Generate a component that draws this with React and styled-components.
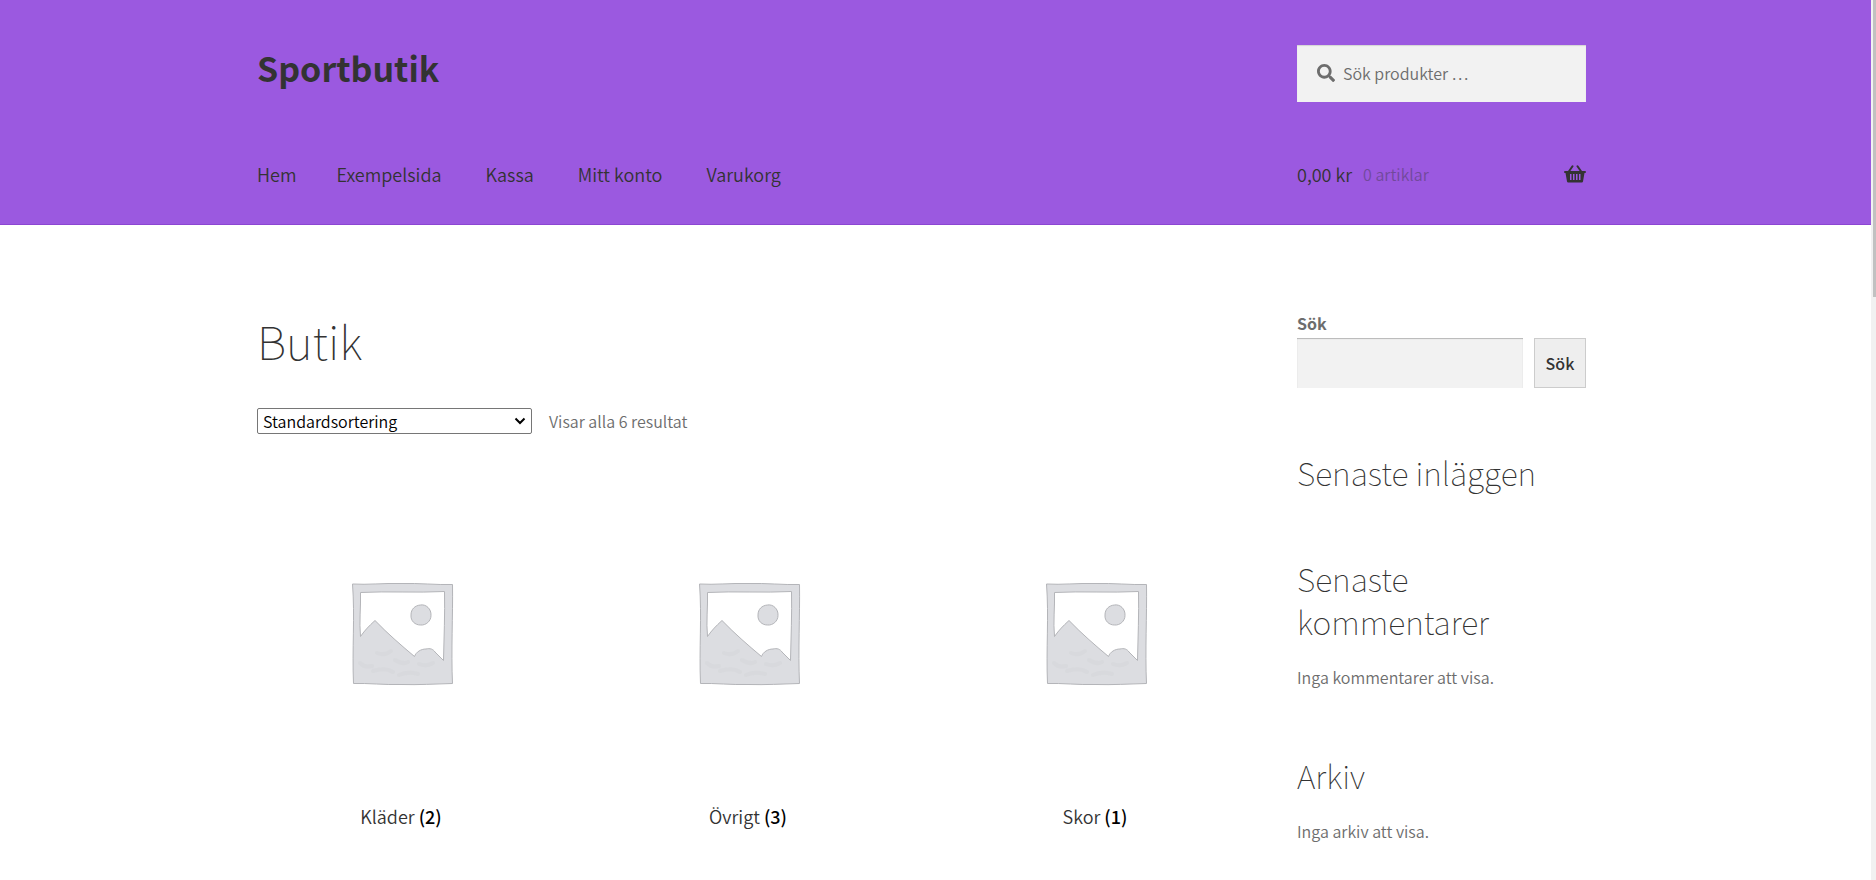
import React from "react";
import styled, { createGlobalStyle } from "styled-components";
import { FaSearch } from "react-icons/fa";

const GlobalStyle = createGlobalStyle`
  *, *::before, *::after { box-sizing: border-box; }
  body {
    margin: 0;
    background: #fff;
    color: #6d6d6d;
    font-family: "Source Sans Pro", "Noto Sans CJK SC", "Noto Sans", sans-serif;
    font-size: 16px;
    font-weight: 350;
    line-height: 28px;
  }
  h1, h2, p, ul { margin: 0; padding: 0; }
  ul { list-style: none; }
  a { color: inherit; text-decoration: none; }
  input, button, select { font-family: inherit; font-size: 16px; font-weight: 350; margin: 0; }
`;

const Window = styled.div`
  display: flex;
  height: 100vh;
  overflow: hidden;
`;

const Page = styled.div`
  flex: 1;
  min-width: 0;
`;

const ScrollTrack = styled.div`
  flex: none;
  width: 5px;
  padding-left: 2px;
  background: #f1f1f1;
`;

const ScrollThumb = styled.div`
  height: 297px;
  background: #c1c1c1;
`;

const Band = styled.div`
  padding: 0 48px 0 20px;
`;

const HeaderBand = styled(Band).attrs({ as: "header" })`
  background: #9b59e0;
  border-bottom: 1px solid #8c46d2;
`;

const Columns = styled.div`
  display: grid;
  grid-template-columns: minmax(0, 1fr) 289px;
  column-gap: 58px;
  max-width: 1329px;
  margin: 0 auto;
`;

const HeaderColumns = styled(Columns)`
  row-gap: 58px;
  padding: 45px 0 36px;
`;

const SiteTitle = styled.a`
  justify-self: start;
  color: #333;
  font-size: 34px;
  font-weight: 700;
  line-height: 46px;
`;

const ProductSearch = styled.label`
  display: flex;
  align-items: center;
  gap: 8px;
  height: 57px;
  padding: 0 20px 2px;
  background: #f2f2f2;
  box-shadow: inset 0 1px 1px rgba(0, 0, 0, 0.125);
  color: #6d6d6d;

  svg { flex: none; width: 18px; height: 18px; }
`;

const SearchInput = styled.input`
  flex: 1;
  min-width: 0;
  padding: 0;
  border: 0;
  outline: 0;
  background: none;
  color: #43454b;

  &::placeholder { color: #6d6d6d; opacity: 1; }
`;

const Nav = styled.nav`
  display: flex;
  gap: 44px;
  flex-wrap: wrap;
  color: #333;
  font-size: 18px;
`;

const NavLink = styled.a`
  margin-right: ${(p) => (p.$first ? "-4px" : "0")};
`;

const Cart = styled.a`
  display: flex;
  align-items: center;
  color: #333;
  font-size: 18px;

  svg { width: 22px; height: 18px; margin-left: auto; }
`;

const CartCount = styled.span`
  margin-left: 11px;
  font-size: 16px;
  opacity: 0.4;
`;

const ContentColumns = styled(Columns)`
  padding-top: 84px;
`;

const PageTitle = styled.h1`
  color: #333;
  font-size: 46px;
  font-weight: 100;
  line-height: 62px;
`;

const Sorting = styled.div`
  display: flex;
  align-items: center;
  gap: 17px;
  margin: 36px 0 55px;
`;

const SortField = styled.div`
  display: grid;
  align-items: center;
  width: 275px;

  > * { grid-area: 1 / 1; }
  svg {
    justify-self: end;
    width: 12px;
    height: 8px;
    margin-right: 6px;
    pointer-events: none;
  }
`;

const SortSelect = styled.select`
  appearance: none;
  width: 100%;
  height: 26px;
  padding: 0 24px 0 5px;
  border: 1px solid #767676;
  border-radius: 2px;
  background: #fff;
  color: #000;
  line-height: 22px;
`;

const Categories = styled.ul`
  display: grid;
  grid-template-columns: repeat(3, minmax(0, 1fr));
  column-gap: 59px;
`;

const Category = styled.a`
  display: flex;
  flex-direction: column;
  gap: 24px;
  text-align: center;

  svg { display: block; width: 100%; }
`;

const CategoryName = styled.h2`
  color: #333;
  font-size: 18px;
  font-weight: 350;
  line-height: 28px;
`;

const Count = styled.span`
  color: #000;
  font-weight: 500;
`;

const Sidebar = styled.aside`
  display: flex;
  flex-direction: column;
  gap: 63px;
`;

const Widget = styled.section`
  display: flex;
  flex-direction: column;
  gap: 20px;
`;

const SearchForm = styled.form`
  display: grid;
  grid-template-columns: minmax(0, 1fr) 52px;
  gap: 1px 11px;
`;

const SearchLabel = styled.label`
  grid-column: 1 / -1;
  font-weight: 700;
`;

const WidgetInput = styled.input`
  width: 100%;
  height: 50px;
  padding: 0 12px;
  border: 0;
  border-radius: 0;
  background: #f2f2f2;
  box-shadow: inset 0 1px 1px rgba(0, 0, 0, 0.25);
`;

const WidgetButton = styled.button`
  height: 50px;
  padding: 0;
  border: 1px solid #ccc;
  border-radius: 0;
  background: #eee;
  color: #333;
  font-weight: 500;
`;

const WidgetTitle = styled.h2`
  color: #333;
  font-size: 32px;
  font-weight: 100;
  line-height: 43px;
`;

const links = ["Hem", "Exempelsida", "Kassa", "Mitt konto", "Varukorg"];

const categories = [
  { name: "Kläder", count: 2 },
  { name: "Övrigt", count: 3 },
  { name: "Skor", count: 1 },
];

function BasketIcon() {
  return (
    <svg viewBox="0 0 22 18" aria-hidden="true">
      <g fill="none" stroke="currentColor" strokeWidth="2" strokeLinecap="round">
        <path d="M8.500 1.200L4.500 7M13.500 1.200L17.500 7" />
      </g>
      <path
        fill="currentColor"
        fillRule="evenodd"
        d="M1 6h20q1 0 1 1t-1 1h-.500l-1.500 8.500q-.200 1-1.200 1H4.200q-1 0-1.200-1L1.500 8H1Q0 8 0 7t1-1ZM6 9v6h1.500V9ZM9 9v6h1.500V9ZM12 9v6h1.500V9ZM15 9v6h1.500V9Z"
      />
    </svg>
  );
}

function Chevron() {
  return (
    <svg viewBox="0 0 12 8" aria-hidden="true">
      <path d="M1.500 1.500L6 6L10.500 1.500" fill="none" stroke="#000" strokeWidth="2" />
    </svg>
  );
}

function Placeholder() {
  return (
    <svg viewBox="1 0 288 288" aria-hidden="true">
      <g stroke="#b4b5b9" strokeWidth="1" strokeLinejoin="round">
        <path
          fill="#dcdde1"
          fillRule="evenodd"
          d="M96.500 94C112 95 127 93 145 93.500C164 93 180 95 196.500 94.500C197 125 195 161 196.500 193.500C178 194 162 195 146 194.500C128 195 112 193 97.500 193.500C96 160 99 126 96.500 94ZM104.500 102.500C105 116 103 132 104.500 146.500C109 140 113 136 119 130.500C132 144 146 156 158.500 166.500C160 162 165 159 170 159C174 158 177 159 179 162L187.500 170.500C188 147 189 124 188.500 101.500C160 103 132 101 104.500 102.500Z"
        />
        <path
          fill="#dcdde1"
          d="M164.500 115C170 114 175.500 119 175 125.500C175 131 170 135.500 164.500 135C159 135 154.500 131 155 125C155 119 159 115.500 164.500 115Z"
        />
      </g>
      <g fill="none" stroke="#d3d4d8" strokeWidth="4" strokeLinecap="round" opacity="0.4">
        <path d="M104 173q5 5 12 3M121 163q8 3 14-2M117 181q12-4 20 1M139 170q8 5 13 2M143 185q9-4 19-1M163 174q7 3 14-1" />
      </g>
    </svg>
  );
}

export default function App() {
  return (
    <Window>
      <GlobalStyle />
      <Page>
        <HeaderBand>
          <HeaderColumns>
            <SiteTitle href="#">Sportbutik</SiteTitle>
            <ProductSearch>
              <FaSearch aria-hidden="true" />
              <SearchInput type="search" aria-label="Sök produkter" placeholder="Sök produkter …" />
            </ProductSearch>
            <Nav>
              {links.map((text, i) => (
                <NavLink key={text} href="#" $first={i === 0}>{text}</NavLink>
              ))}
            </Nav>
            <Cart href="#">
              0,00 kr <CartCount>0 artiklar</CartCount>
              <BasketIcon />
            </Cart>
          </HeaderColumns>
        </HeaderBand>
        <Band>
          <ContentColumns>
            <main>
              <PageTitle>Butik</PageTitle>
              <Sorting>
                <SortField>
                  <SortSelect aria-label="Sortering">
                    <option>Standardsortering</option>
                  </SortSelect>
                  <Chevron />
                </SortField>
                <p>Visar alla 6 resultat</p>
              </Sorting>
              <Categories>
                {categories.map(({ name, count }) => (
                  <li key={name}>
                    <Category href="#">
                      <Placeholder />
                      <CategoryName>
                        {name} <Count>({count})</Count>
                      </CategoryName>
                    </Category>
                  </li>
                ))}
              </Categories>
            </main>
            <Sidebar>
              <SearchForm>
                <SearchLabel htmlFor="widget-search">Sök</SearchLabel>
                <WidgetInput id="widget-search" type="search" />
                <WidgetButton type="button">Sök</WidgetButton>
              </SearchForm>
              <Widget>
                <WidgetTitle>Senaste inläggen</WidgetTitle>
              </Widget>
              <Widget>
                <WidgetTitle>Senaste kommentarer</WidgetTitle>
                <p>Inga kommentarer att visa.</p>
              </Widget>
              <Widget>
                <WidgetTitle>Arkiv</WidgetTitle>
                <p>Inga arkiv att visa.</p>
              </Widget>
            </Sidebar>
          </ContentColumns>
        </Band>
      </Page>
      <ScrollTrack>
        <ScrollThumb />
      </ScrollTrack>
    </Window>
  );
}
